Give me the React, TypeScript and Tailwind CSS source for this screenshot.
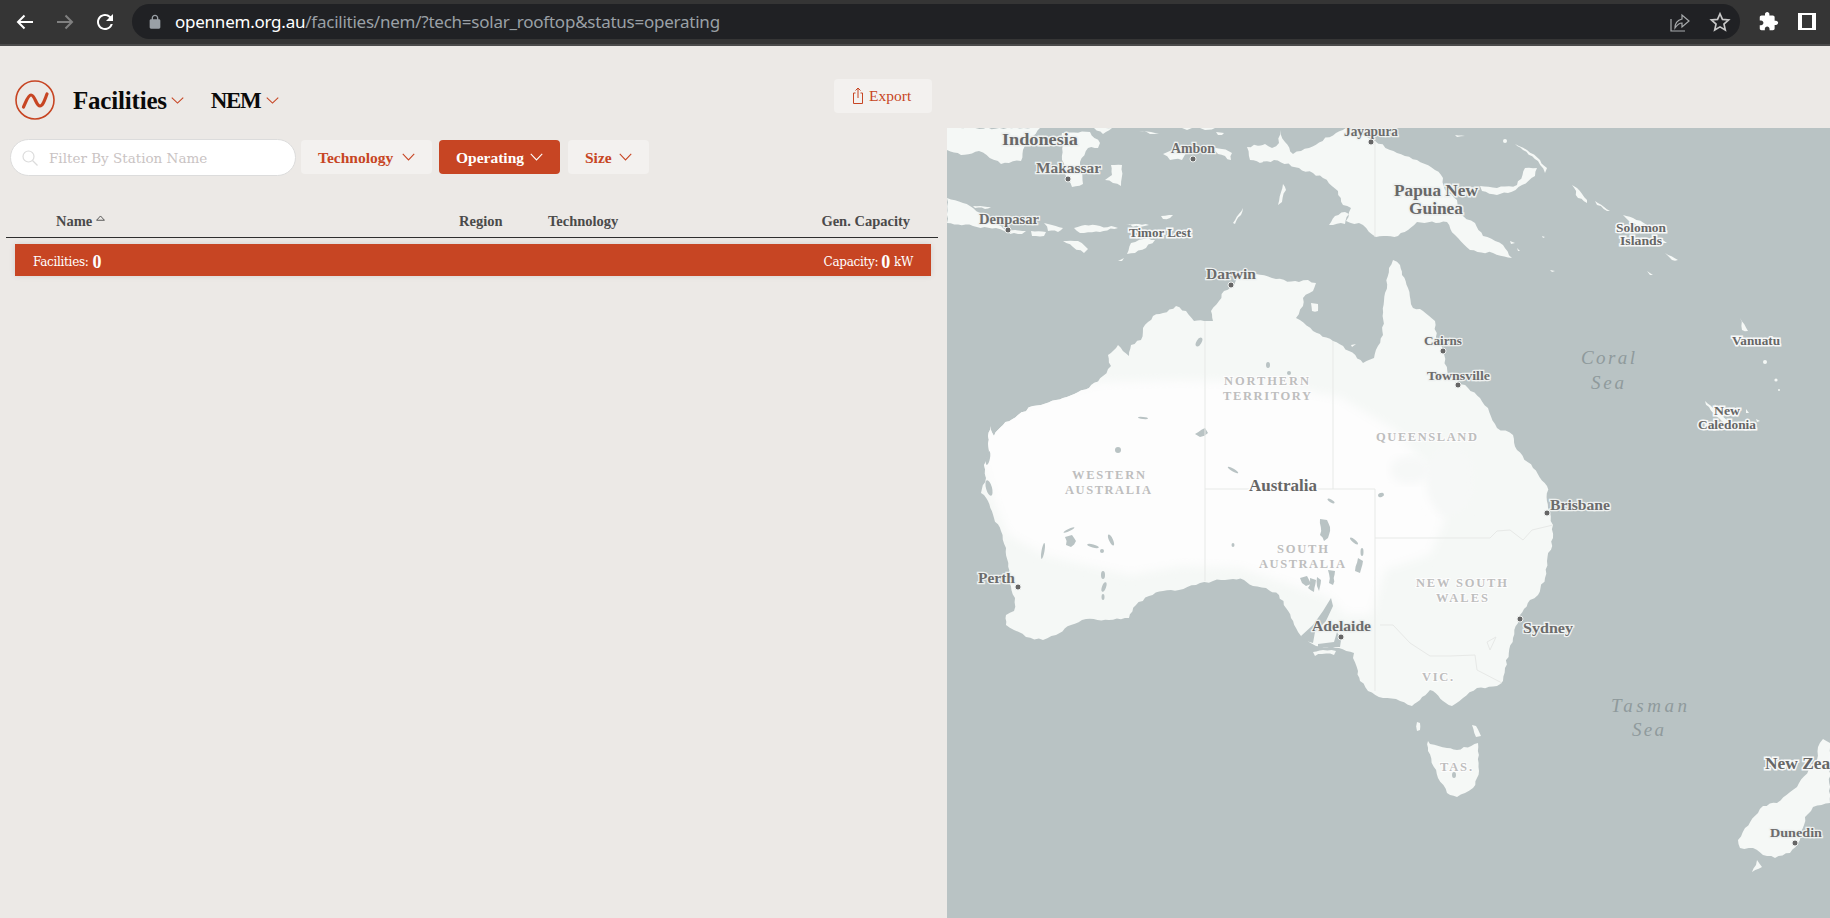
const seaFill = "fill-[#b9c3c4]";
const landFill = "fill-[#f5f8f6]";

// Roughens a traced outline so that the coast reads as jagged rather than straight.
function rough(p: string): string {
  const pts = p.trim().split(" ").map((s) => s.split(",").map(Number));
  const out: string[] = [];
  let k = 1;
  pts.forEach((a, i) => {
    const b = pts[(i + 1) % pts.length];
    const dx = b[0] - a[0];
    const dy = b[1] - a[1];
    const d = Math.hypot(dx, dy);
    const n = Math.max(1, Math.round(d / 4));
    for (let j = 0; j < n; j++) {
      const t = j / n;
      k += 1;
      const r = Math.sin(k * 12.9898) * 43758.5453;
      const off = j === 0 ? 0 : (r - Math.floor(r) - 0.5) * 2.4;
      const x = a[0] + dx * t + (-dy / (d || 1)) * off;
      const y = a[1] + dy * t + (dx / (d || 1)) * off;
      out.push(`${x.toFixed(1)},${y.toFixed(1)}`);
    }
  });
  return out.join(" ");
}

const australia = rough(
  "1204,321 1213,321 1211,311 1219,301 1224,291 1231,287 1239,276 1256,274 1276,279 1299,282 1308,280 1316,283 1313,291 1303,298 1303,306 1296,318 1313,331 1333,341 1349,351 1363,363 1374,358 1383,335 1384,301 1389,268 1393,260 1400,265 1402,275 1408,288 1413,308 1423,311 1435,321 1437,341 1443,351 1448,375 1468,388 1480,398 1488,408 1497,428 1513,435 1517,450 1533,468 1547,486 1548,508 1553,525 1553,538 1547,561 1545,578 1538,595 1530,600 1520,615 1513,638 1505,668 1503,681 1497,686 1477,688 1463,698 1452,706 1443,701 1433,691 1430,690 1420,700 1412,706 1400,701 1383,698 1368,691 1360,681 1358,671 1353,658 1354,653 1339,648 1316,646 1301,636 1296,628 1286,608 1279,595 1266,588 1253,586 1244,580 1233,579 1213,581 1196,585 1179,590 1163,591 1149,596 1136,605 1129,618 1109,620 1086,619 1071,625 1056,635 1043,640 1026,637 1014,630 1006,625 1006,615 1014,611 1015,598 1009,578 1006,548 1001,531 994,518 988,501 981,493 986,478 984,465 989,451 988,436 991,426 994,436 1003,425 1018,415 1033,406 1056,400 1063,398 1089,388 1103,376 1111,366 1108,355 1118,345 1129,356 1131,345 1141,340 1143,328 1153,316 1163,313 1176,306 1186,311 1194,321"
);

const landPolys = [
  // New Guinea
  "1346,128 1375,141 1397,153 1417,160 1435,170 1443,178 1445,190 1457,200 1463,216 1475,223 1483,236 1503,245 1512,258 1493,253 1470,250 1455,235 1447,222 1417,222 1408,230 1398,236 1376,237 1363,225 1346,221 1351,208 1343,205 1338,191 1323,178 1299,168 1274,160 1260,163 1250,160 1247,147 1265,144 1272,148 1279,143 1280,130 1285,142 1293,154 1309,148 1336,133",
  // Borneo
  "947,128 1040,128 1030,138 1023,150 1021,161 1001,164 979,151 961,155 947,150",
  // Sulawesi
  "1062,133 1090,132 1100,143 1098,148 1088,148 1080,162 1083,184 1072,187 1066,176 1062,160",
  "1111,165 1122,165 1121,186 1113,183 1105,180 1112,175",
  "1094,128 1112,128 1103,134",
  "1139,131 1159,133 1150,134",
  "1216,132 1224,133 1222,135 1218,135",
  "1182,128 1192,128 1187,130",
  "1200,128 1215,128 1205,130",
  // Seram
  "1163,154 1172,150 1178,148 1190,150 1182,160 1170,160",
  "1208,147 1222,149 1232,153 1231,160 1218,154",
  "1254,147 1266,145 1270,155 1262,163 1258,155",
  // Java
  "947,198 963,203 973,208 985,215 1001,226 1009,233 996,228 973,226 947,223",
  "973,206 991,207 985,209 975,208",
  "1008,230 1026,231 1022,234 1010,234",
  "1031,231 1046,232 1044,236 1032,236",
  "1044,223 1052,225 1063,228 1058,232 1048,231",
  "1074,228 1085,225 1115,227 1118,228 1100,232 1080,233",
  "1063,241 1078,241 1088,249 1084,253 1073,247",
  "1127,254 1131,243 1148,238 1155,240 1146,248 1135,253",
  "1126,225 1135,224 1149,225 1140,227",
  "1161,216 1173,215 1170,218 1163,219",
  "1233,223 1243,208 1241,215 1235,224",
  "1278,205 1283,184 1286,190 1282,202",
  "1118,261 1124,258 1122,261",
  "1329,225 1335,216 1345,212 1349,214 1345,224",
  "1311,303 1318,304 1318,311 1312,311",
  "1351,345 1356,344 1352,347",
  // Kangaroo, King, Flinders, Tasmania
  "1313,652 1323,650 1336,651 1334,655 1322,654 1315,656",
  "1417,722 1420,723 1420,730 1417,731",
  "1472,725 1476,726 1481,736 1476,737",
  "1428,741 1430,744 1447,748 1457,750 1478,743 1479,771 1473,788 1465,793 1457,797 1447,793 1438,778 1428,751",
  // New Britain, New Ireland and the Solomons
  "1480,186 1497,188 1517,185 1525,168 1537,168 1535,176 1522,185 1508,193 1497,195 1482,191",
  "1515,144 1527,150 1540,160 1547,168 1545,173 1538,161 1523,150",
  "1572,185 1577,188 1587,200 1587,203 1578,198",
  "1595,201 1610,211 1607,211 1597,205",
  "1623,215 1633,218 1647,225 1640,226 1630,222",
  "1660,238 1667,243 1663,243",
  "1665,253 1678,260 1672,260",
  "1550,270 1555,271 1552,272",
  "1647,271 1653,275 1650,275",
  "1542,236 1545,237 1543,238",
  "1510,241 1515,243 1511,244",
  "1517,248 1520,251 1518,251",
  "1455,135 1465,136 1457,137",
  // Vanuatu, New Caledonia
  "1740,318 1748,331 1742,330",
  "1705,401 1713,408 1727,420 1743,430 1727,426 1713,413",
  "1746,409 1749,413 1746,413",
  "1756,419 1760,421 1757,422",
  // New Zealand
  "1823,739 1830,743 1830,803 1813,807 1805,817 1800,840 1790,853 1775,858 1763,855 1753,848 1740,848 1738,840 1745,828 1758,813 1763,806 1777,803 1797,787 1817,760 1818,747",
  "1757,860 1762,867 1752,872 1756,865",
].map(rough);

const inlets = [
  "1301,636 1313,625 1323,611 1331,598 1333,606 1326,621 1315,632 1313,643 1303,640",
  "1318,644 1334,642 1337,632 1341,640 1340,647 1318,647",
];

const saltLakes = [
  "1320,519 1327,520 1330,527 1328,538 1324,541 1320,535",
  "1300,578 1307,576 1311,584 1306,586 1302,583",
  "1310,578 1316,580 1314,592 1308,588",
  "1317,577 1321,580 1319,591 1317,586",
  "1328,570 1335,571 1333,585 1329,583",
  "1195,434 1205,428 1208,433 1200,437",
  "1065,537 1072,535 1076,541 1071,547 1066,545",
  "1358,558 1363,561 1360,573 1355,571",
];

const lakes = [
  [1199, 342, 2.5, 5, 30], [1268, 365, 2, 3, 0], [1289, 373, 2, 2, 0], [1143, 418, 5, 1, 5], [1118, 450, 3, 3, 0],
  [1233, 470, 6, 1.3, 30], [1354, 541, 5, 1.5, 40], [1362, 552, 1.5, 4, 0],
  [1233, 545, 1.5, 2, 0], [988, 458, 2, 7, 10], [989, 488, 3, 8, -15], [1069, 530, 6, 1.2, -25],
  [1043, 551, 1.5, 8, 10], [1093, 546, 6, 1.6, 15], [1102, 551, 2, 2, 0], [1111, 540, 2, 6, -25], [1103, 575, 2, 4, 0],
  [1104, 587, 2, 5, 20], [1103, 597, 1.5, 3, 0], [1331, 501, 4, 1.3, 30], [1381, 495, 3, 2, -20], [1454, 775, 2, 3, 0],
];

const dots = [
  [1371, 142], [1193, 159], [1068, 179], [1008, 230], [1231, 285], [1443, 351],
  [1458, 385], [1018, 587], [1341, 637], [1547, 513], [1520, 619], [1795, 843],
];

const city = "fill-[#6c6c6c] stroke-[#eef1f0] stroke-[2.5px] font-bold [paint-order:stroke]";
const isle = "fill-[#666666] stroke-[#f7f8f8] stroke-[3px] font-bold [paint-order:stroke]";
const country = "fill-[#686868] stroke-[#eef1f0] stroke-[3px] font-bold [paint-order:stroke]";
const region = "fill-[#bebebe] stroke-[#fdfdfd] stroke-[2px] font-bold [paint-order:stroke]";
const sea = "fill-[#8f9a9c] italic";

const labels: [string, number, number, number, number, string][] = [
  ["Indonesia", 1002, 145, 76, 17, country],
  ["Makassar", 1036, 173, 65, 14, city],
  ["Ambon", 1171, 153, 44, 14, city],
  ["Jayapura", 1344, 136, 54, 14, city],
  ["Denpasar", 979, 224, 60, 14, city],
  ["Timor Lest", 1129, 237, 62, 13, isle],
  ["Darwin", 1206, 279, 50, 15, city],
  ["Papua New", 1394, 196, 84, 17, country],
  ["Guinea", 1409, 214, 54, 17, country],
  ["Solomon", 1616, 232, 50, 13, isle],
  ["Islands", 1620, 245, 42, 13, isle],
  ["Cairns", 1424, 345, 38, 13.5, city],
  ["Townsville", 1427, 380, 63, 13.5, city],
  ["Vanuatu", 1732, 345, 48, 13, isle],
  ["Coral", 1581, 364, 54, 19, sea],
  ["Sea", 1591, 389, 33, 19, sea],
  ["NORTHERN", 1224, 385, 85, 12.5, region],
  ["TERRITORY", 1223, 400, 88, 12.5, region],
  ["QUEENSLAND", 1376, 441, 101, 12.5, region],
  ["WESTERN", 1072, 479, 73, 12.5, region],
  ["AUSTRALIA", 1065, 494, 86, 12.5, region],
  ["Australia", 1249, 491, 68, 17, "fill-[#666666] stroke-[#fdfdfd] stroke-[3px] font-bold [paint-order:stroke]"],
  ["SOUTH", 1277, 553, 51, 12.5, region],
  ["AUSTRALIA", 1259, 568, 86, 12.5, region],
  ["Perth", 978, 583, 37, 14, city],
  ["Adelaide", 1312, 631, 59, 15, city],
  ["Brisbane", 1550, 510, 60, 14, city],
  ["Sydney", 1523, 633, 50, 14, city],
  ["NEW SOUTH", 1416, 587, 91, 12.5, region],
  ["WALES", 1436, 602, 52, 12.5, region],
  ["New", 1714, 415, 26, 13, isle],
  ["Caledonia", 1698, 429, 58, 13, isle],
  ["VIC.", 1422, 681, 31, 12.5, region],
  ["TAS.", 1440, 771, 32, 12.5, region],
  ["Tasman", 1611, 712, 76, 19, sea],
  ["Sea", 1632, 736, 32, 19, sea],
  ["New Zealand", 1765, 769, 98, 17, isle],
  ["Dunedin", 1770, 837, 52, 13.5, city],
];

function MapDrawing() {
  return (
    <svg viewBox="947 128 883 790" className="block h-full w-full font-['Liberation_Serif',serif]">
      <defs>
        <clipPath id="aus">
          <polygon points={australia} />
        </clipPath>
        <filter id="soft" x="-10%" y="-10%" width="120%" height="120%">
          <feGaussianBlur stdDeviation="5" />
        </filter>
      </defs>
      <rect x="947" y="128" width="883" height="790" className={seaFill} />
      {landPolys.map((p, i) => (
        <polygon key={i} points={p} className={landFill} />
      ))}
      <polygon points={australia} className={landFill} />
      <g clipPath="url(#aus)">
        <polygon
          filter="url(#soft)"
          className="fill-[#fdfdfd]"
          points="975,440 1010,410 1060,392 1100,382 1180,380 1260,382 1340,397 1395,430 1430,470 1445,520 1430,555 1385,570 1372,615 1345,615 1330,598 1290,585 1240,568 1180,566 1130,575 1085,565 1045,555 1008,535 995,505"
        />
        <ellipse cx="1450" cy="480" rx="24" ry="36" className="fill-[#f6f8f7]" filter="url(#soft)" />
        <ellipse cx="1410" cy="470" rx="20" ry="14" className="fill-[#f6f8f7]" filter="url(#soft)" />
      </g>
      {inlets.map((p, i) => (
        <polygon key={i} points={p} className={seaFill} />
      ))}
      {saltLakes.map((p, i) => (
        <polygon key={i} points={rough(p)} className={seaFill} />
      ))}
      {lakes.map(([cx, cy, rx, ry, a], i) => (
        <ellipse key={i} cx={cx} cy={cy} rx={rx} ry={ry} transform={`rotate(${a} ${cx} ${cy})`} className={seaFill} />
      ))}
      <g className="fill-none stroke-[#e7e9e7] stroke-1">
        <polyline points="1205,321 1205,581" />
        <polyline points="1333,341 1333,489" />
        <polyline points="1205,489 1375,489 1375,691" />
        <polyline points="1375,538 1490,538 1497,531 1510,530 1523,540 1532,530 1553,525" />
        <polyline points="1380,625 1393,625 1410,643 1430,656 1450,656 1475,655 1477,670 1502,683" />
        <polyline points="1375,141 1375,237" />
        <polyline points="1487,642 1496,637 1490,650 1487,642" />
      </g>
      <circle cx="1765" cy="362" r="2" className={landFill} />
      <circle cx="1776" cy="380" r="1.6" className={landFill} />
      <circle cx="1779" cy="390" r="1" className={landFill} />
      <circle cx="1505" cy="141" r="2" className={landFill} />
      {labels.map(([t, x, y, w, s, c], i) => (
        <text key={i} x={x} y={y} fontSize={s} textLength={w} lengthAdjust={s === 12.5 || c === sea ? "spacing" : "spacingAndGlyphs"} className={c}>
          {t}
        </text>
      ))}
      {dots.map(([cx, cy], i) => (
        <circle key={i} cx={cx} cy={cy} r="3" className="fill-[#666666] stroke-[#eef1f0] stroke-1" />
      ))}
    </svg>
  );
}

function Chevron({ className }: { className: string }) {
  return (
    <svg viewBox="0 0 12 7" className={className} fill="none" stroke="currentColor" strokeWidth="1" preserveAspectRatio="none">
      <path d="M0.7 0.7 L6 6 L11.3 0.7" />
    </svg>
  );
}

function BrowserBar() {
  return (
    <div className="flex h-[46px] shrink-0 items-center border-b-2 border-[#4b4b4b] bg-[#353535] pb-[1px]">
      <div className="flex w-[132px] items-center">
        <svg viewBox="0 0 18 16" className="ml-[16px] h-4 w-[18px] text-white" fill="none" stroke="currentColor" strokeWidth="2">
          <path d="M17 8 H2 M8.5 1.5 L2 8 L8.5 14.5" />
        </svg>
        <svg viewBox="0 0 18 16" className="ml-[22px] h-4 w-[18px] text-[#808080]" fill="none" stroke="currentColor" strokeWidth="2">
          <path d="M1 8 H16 M9.5 1.5 L16 8 L9.5 14.5" />
        </svg>
        <svg viewBox="0 0 24 24" className="ml-[19px] h-6 w-6 fill-white">
          <path d="M17.65 6.35A7.958 7.958 0 0 0 12 4c-4.42 0-7.99 3.58-7.99 8s3.57 8 7.99 8c3.73 0 6.84-2.55 7.73-6h-2.08A5.99 5.99 0 0 1 12 18c-3.31 0-6-2.69-6-6s2.69-6 6-6c1.66 0 3.14.69 4.22 1.78L13 11h7V4l-2.35 2.35z" />
        </svg>
      </div>
      <div className="flex h-[35px] w-[1608px] items-center rounded-full bg-[#202124] pl-[15px] pr-[9px]">
        <svg viewBox="0 0 24 24" className="h-4 w-4 fill-[#9aa0a6]">
          <path d="M18 8h-1V6c0-2.76-2.24-5-5-5S7 3.24 7 6v2H6c-1.1 0-2 .9-2 2v10c0 1.1.9 2 2 2h12c1.1 0 2-.9 2-2V10c0-1.1-.9-2-2-2zM9 6c0-1.66 1.34-3 3-3s3 1.34 3 3v2H9V6z" />
        </svg>
        <div className="ml-[12px] font-['Noto_Sans',sans-serif] text-[17px] tracking-[-0.24px] text-[#9aa0a6]">
          <span className="text-white">opennem.org.au</span>/facilities/nem/?tech=solar_rooftop&amp;status=operating
        </div>
        <svg viewBox="0 0 24 24" className="ml-auto h-6 w-6 text-[#a8abad]" fill="none" stroke="currentColor" strokeWidth="1.2">
          <path d="M3 9 V21 H17" />
          <path d="M7 18 C7 13 10 10 14 9 V5 L21 11 L14 17 V13 C11 13 9 15 7 18 Z" />
        </svg>
        <svg viewBox="0 0 24 24" className="ml-[17px] h-[22px] w-[22px] text-[#c8c8c8]" fill="none" stroke="currentColor" strokeWidth="1.8">
          <path d="M12 3 L14.7 9.2 L21.4 9.8 L16.3 14.2 L17.8 20.8 L12 17.3 L6.2 20.8 L7.7 14.2 L2.6 9.8 L9.3 9.2 Z" />
        </svg>
      </div>
      <svg viewBox="0 0 24 24" className="ml-[18px] h-[21px] w-[21px] fill-white">
        <path d="M20.5 11H19V7c0-1.1-.9-2-2-2h-4V3.5C13 2.12 11.88 1 10.5 1S8 2.12 8 3.5V5H4c-1.1 0-1.99.9-1.99 2v3.8H3.5c1.49 0 2.7 1.21 2.7 2.7s-1.21 2.7-2.7 2.7H2V20c0 1.1.9 2 2 2h3.8v-1.5c0-1.49 1.21-2.7 2.7-2.7 1.49 0 2.7 1.21 2.7 2.7V22H17c1.1 0 2-.9 2-2v-4h1.5c1.38 0 2.5-1.12 2.5-2.5S21.88 11 20.5 11z" />
      </svg>
      <div className="ml-[19px] h-[17px] w-[18px] border-y-2 border-l-[4px] border-r-[4px] border-white" />
    </div>
  );
}

function FilterButton({ label, width, active }: { label: string; width: string; active?: boolean }) {
  return (
    <div
      className={`mb-[1px] flex h-[34px] items-center justify-between rounded-[4px] pl-[17px] pr-[17px] pt-[2px] text-[15.5px] font-bold ${width} ${
        active ? "bg-[#c74523] text-white" : "bg-[#f3f1ef] text-[#c74523]"
      }`}
    >
      <span>{label}</span>
      <Chevron className="mb-[3px] h-[8px] w-[13px]" />
    </div>
  );
}

export default function App() {
  return (
    <div className="flex h-screen w-full flex-col overflow-hidden bg-[#ece9e6] font-['Liberation_Serif',serif]">
      <BrowserBar />
      <div className="flex min-h-0 flex-1">
        <div className="w-[947px] shrink-0">
          <div className="flex items-start justify-between pl-[15px] pr-[15px] pt-[33px]">
            <div className="flex items-center pt-[1px]">
              <svg viewBox="0 0 40 40" className="h-10 w-10 text-[#c74523]" fill="none" stroke="currentColor">
                <circle cx="20" cy="20" r="19" strokeWidth="1.6" />
                <path d="M8.5 27 C11 22 13 15 16 15 C20 15 21 26 25 26 C28 26 30 19 32 14" strokeWidth="3.2" strokeLinecap="round" />
              </svg>
              <span className="ml-[18px] pt-[2px] text-[25px] font-bold tracking-[-0.2px] text-[#0a0a0a]">Facilities</span>
              <Chevron className="ml-[4px] mt-[1px] h-[7px] w-[13px] text-[#c74523]" />
              <span className="ml-[27px] pt-[2px] text-[23px] font-bold tracking-[-1.4px] text-[#0a0a0a]">NEM</span>
              <Chevron className="ml-[6px] mt-[1px] h-[7px] w-[13px] text-[#c74523]" />
            </div>
            <div className="flex h-[34px] w-[98px] items-center rounded-[4px] bg-[#f3f1ef] pl-[18px] text-[15.5px] text-[#c74523]">
              <svg viewBox="0 0 12 18" className="h-[18px] w-3" fill="none" stroke="currentColor" strokeWidth="1">
                <path d="M3.5 6 H1.5 V16.5 H10.5 V6 H8.5 M6 11 V1 M3.5 3.5 L6 1 L8.5 3.5" />
              </svg>
              <span className="ml-[5px]">Export</span>
            </div>
          </div>

          <div className="mt-[19px] flex items-center pl-[10px]">
            <div className="flex h-[37px] w-[286px] items-center rounded-full border border-[#dcdcdc] bg-white pl-[11px]">
              <svg viewBox="0 0 16 16" className="h-4 w-4 text-[#dcdcdc]" fill="none" stroke="currentColor" strokeWidth="1.2">
                <circle cx="6.5" cy="6.5" r="5.5" />
                <path d="M10.5 10.5 L15.5 15.5" />
              </svg>
              <span className="ml-[11px] pt-[2px] font-['DejaVu_Serif',serif] text-[13.5px] text-[#c9c3c3]">Filter By Station Name</span>
            </div>
            <div className="ml-[5px]">
              <FilterButton label="Technology" width="w-[131px]" />
            </div>
            <div className="ml-[7px]">
              <FilterButton label="Operating" width="w-[121px]" active />
            </div>
            <div className="ml-[8px]">
              <FilterButton label="Size" width="w-[81px]" />
            </div>
          </div>

          <div className="ml-[6px] mt-[30px] flex h-[32px] w-[932px] items-center border-b border-[#2e2e2e] pl-[50px] pr-[28px] text-[14.5px] font-bold text-[#4a4a4a]">
            <div className="flex w-[403px] items-center">
              <span>Name</span>
              <svg viewBox="0 0 8 5" className="mb-[8px] ml-[4px] h-[6px] w-[9px] text-[#4a4a4a]" fill="none" stroke="currentColor" strokeWidth="0.8">
                <path d="M0.5 4.5 L4 0.7 L7.5 4.5 Z" />
              </svg>
            </div>
            <div className="w-[89px]">Region</div>
            <div>Technology</div>
            <div className="ml-auto">Gen. Capacity</div>
          </div>

          <div className="ml-[15px] mt-[6px] flex h-[32px] w-[916px] items-center justify-between bg-[#c74523] pl-[18px] pr-[18px] pt-[4px] font-['DejaVu_Serif',serif] text-[12px] tracking-[-0.3px] text-white shadow-[0_0_6px_rgba(0,0,0,0.1)]">
            <div className="flex items-center">
              Facilities:
              <span className="ml-[4px] font-['Liberation_Serif',serif] text-[18px] font-bold leading-none">0</span>
            </div>
            <div className="flex items-center">
              Capacity:
              <span className="ml-[3px] font-['Liberation_Serif',serif] text-[18px] font-bold leading-none">0</span>
              <span className="ml-[4px]">kW</span>
            </div>
          </div>
        </div>

        <div className="min-w-0 flex-1 pt-[82px]">
          <MapDrawing />
        </div>
      </div>
    </div>
  );
}
